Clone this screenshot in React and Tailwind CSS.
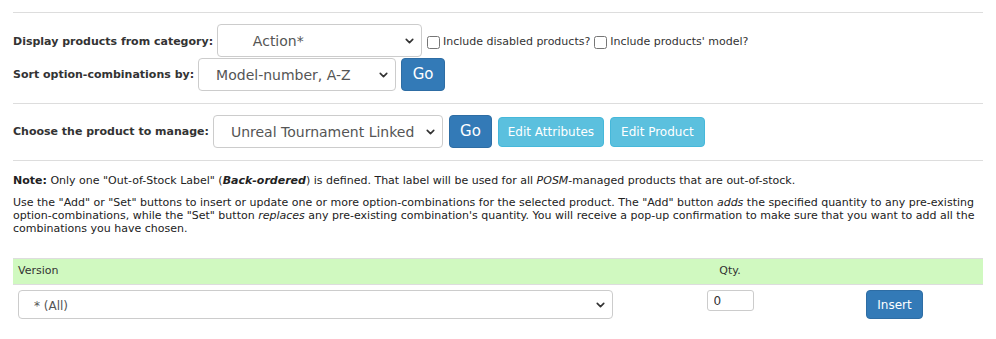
import { ChevronDown } from 'lucide-react';

const Select = ({ value, className = '', textClass = 'text-[14px] pl-[17px]' }) => (
  <div className={`relative ${className}`}>
    <select
      defaultValue={value}
      className={`appearance-none w-full h-full bg-white border border-[#ccc] rounded-[4px] text-[#555] outline-none pt-[2px] ${textClass}`}
    >
      <option>{value}</option>
    </select>
    <ChevronDown
      size={13}
      strokeWidth={3}
      className="absolute right-[6px] top-1/2 -translate-y-1/2 text-[#333] pointer-events-none"
    />
  </div>
);

const Btn = ({ children, kind = 'primary', className = '' }) => {
  const colors =
    kind === 'primary'
      ? 'bg-[#337ab7] border-[#2e6da4]'
      : 'bg-[#5bc0de] border-[#46b8da]';
  return (
    <button className={`${colors} border text-white rounded-[4px] ${className}`}>
      {children}
    </button>
  );
};

export default function App() {
  return (
    <div className="bg-white w-[996px] h-[339px] font-['DejaVu_Sans',sans-serif] text-[#333] text-[11px]">
      <div className="ml-[13px] w-[970px] pt-[12px]">
        <div className="border-t border-[#ddd]" />

        <div className="pt-[11px]">
          <div className="flex items-center h-[33px]">
            <label className="font-bold mr-[4px] mt-[3px]">Display products from category:</label>
            <Select value={'\u00a0\u00a0\u00a0\u00a0Action*'} className="w-[205px] h-[33px]" />
            <input type="checkbox" className="ml-[5px] mr-[3px] mt-[3px] w-[13px] h-[13px] m-0" />
            <span className="mt-[3px]">Include disabled products?</span>
            <input type="checkbox" className="ml-[4px] mr-[3px] mt-[3px] w-[13px] h-[13px] m-0" />
            <span className="mt-[3px]">Include products' model?</span>
          </div>
          <div className="flex items-center h-[33px] mt-[1px]">
            <label className="font-bold mr-[4px] mt-[2px]">Sort option-combinations by:</label>
            <Select value="Model-number, A-Z" className="w-[198px] h-[33px]" />
            <Btn className="ml-[5px] w-[44px] h-[33px] text-[15px]">Go</Btn>
          </div>
        </div>

        <div className="border-t border-[#ddd] mt-[12px]" />

        <div className="flex items-center h-[33px] mt-[11px]">
          <label className="font-bold mr-[4px] mt-[2px]">Choose the product to manage:</label>
          <Select value="Unreal Tournament Linked" className="w-[230px] h-[33px]" />
          <Btn className="ml-[6px] w-[43px] h-[33px] text-[15px]">Go</Btn>
          <Btn kind="info" className="ml-[6px] w-[106px] h-[30px] text-[12px]">Edit Attributes</Btn>
          <Btn kind="info" className="ml-[6px] w-[95px] h-[30px] text-[12px]">Edit Product</Btn>
        </div>

        <div className="border-t border-[#ddd] mt-[12px]" />

        <p className="mt-[13px] leading-[13px] text-[#222]">
          <b>Note:</b> Only one "Out-of-Stock Label" (<b><i>Back-ordered</i></b>) is defined. That label will be used for all <i>POSM</i>-managed products that are out-of-stock.
        </p>
        <p className="mt-[9px] leading-[13px] text-[#222]">
          Use the "Add" or "Set" buttons to insert or update one or more option-combinations for the selected product. The "Add" button <i>adds</i> the specified quantity to any pre-existing option-combinations, while the "Set" button <i>replaces</i> any pre-existing combination's quantity. You will receive a pop-up confirmation to make sure that you want to add all the combinations you have chosen.
        </p>

        <div className="mt-[23px] grid grid-cols-[641px_152px_177px] bg-[#d0f9c0] border-y border-[#ddd] h-[27px] items-center text-[#333]">
          <div className="pl-[5px]">Version</div>
          <div className="text-center">Qty.</div>
          <div />
        </div>
        <div className="grid grid-cols-[641px_152px_177px] pt-[5px] items-start">
          <div className="pl-[5px]">
            <Select value="* (All)" className="w-[595px] h-[29px]" textClass="text-[12px] pl-[15px]" />
          </div>
          <div className="flex justify-center">
            <input
              type="text"
              defaultValue="0"
              className="w-[47px] h-[21px] border border-[#ccc] rounded-[3px] px-[6px] text-[12px] text-[#333] outline-none"
            />
          </div>
          <div className="flex justify-center">
            <Btn className="w-[57px] h-[29px] text-[12px]">Insert</Btn>
          </div>
        </div>
      </div>
    </div>
  );
}
